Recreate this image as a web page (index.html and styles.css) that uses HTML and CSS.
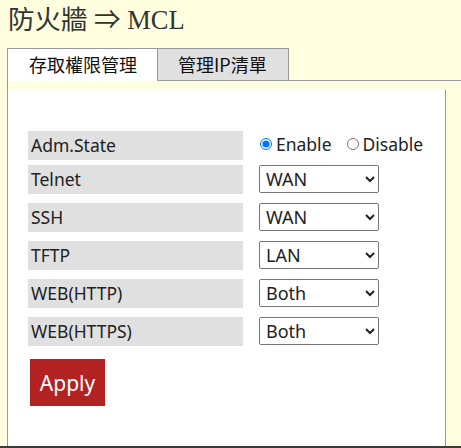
FILE: index.html
```
<!DOCTYPE html>
<html lang="zh-Hant">
<head>
    <meta charset="UTF-8">
    <title>防火牆 ⇒ MCL</title>
    <link rel="stylesheet" href="styles.css">
</head>
<body>
    <div class="page-title">防火牆 ⇒ MCL</div>
    <div class="tabs">
        <div class="tab active">存取權限管理</div>
        <div class="tab">管理IP清單</div>
    </div>
    <div class="tab-body">
        <div class="panel">
            <div class="form-row first">
                <div class="field-label">Adm.State</div>
                <div class="radio-group">
                    <label><input type="radio" name="state" checked>Enable</label>
                    <label><input type="radio" name="state">Disable</label>
                </div>
            </div>
            <div class="form-row">
                <div class="field-label">Telnet</div>
                <select class="field-select"><option>WAN</option><option>LAN</option><option>Both</option></select>
            </div>
            <div class="form-row">
                <div class="field-label">SSH</div>
                <select class="field-select"><option>WAN</option><option>LAN</option><option>Both</option></select>
            </div>
            <div class="form-row">
                <div class="field-label">TFTP</div>
                <select class="field-select"><option>LAN</option><option>WAN</option><option>Both</option></select>
            </div>
            <div class="form-row">
                <div class="field-label">WEB(HTTP)</div>
                <select class="field-select"><option>Both</option><option>WAN</option><option>LAN</option></select>
            </div>
            <div class="form-row">
                <div class="field-label">WEB(HTTPS)</div>
                <select class="field-select"><option>Both</option><option>WAN</option><option>LAN</option></select>
            </div>
            <button class="apply-button">Apply</button>
        </div>
    </div>
    <div class="bottom-bar"></div>
</body>
</html>
```

FILE: styles.css
```
body {
    margin: 0;
    background-color: #ffffe0;
    font-family: "Noto Sans", "Noto Sans CJK TC", sans-serif;
    color: #222;
}
.page-title {
    font-family: "Liberation Serif", "Noto Sans CJK TC", serif;
    font-size: 26.5px;
    line-height: 32px;
    color: #333;
    padding: 4px 8px 0;
    height: 48px;
    box-sizing: border-box;
}
.tabs {
    display: flex;
    margin-left: 7px;
    border-bottom: 1px solid #999;
    height: 32px;
}
.tab {
    font-family: "Noto Sans CJK TC", sans-serif;
    font-size: 18px;
    line-height: 31px;
    padding: 0 20px 0 21px;
    border: 1px solid #999;
    border-bottom: none;
    background-color: #e0e0e0;
    color: #111;
}
.tab + .tab {
    border-left: none;
    border-bottom: 1px solid #999;
    height: 31px;
    padding: 0 21px 0 20px;
}
.tab.active {
    background-color: #fff;
    height: 32px;
    position: relative;
    z-index: 1;
}
.tab-body {
    margin: 0 15px 0 7px;
    border-left: 1px solid #999;
    padding-top: 9px;
}
.panel {
    background-color: #fff;
    border-right: 1px solid #999;
    padding: 41px 20px 40px;
}
.form-row {
    display: flex;
    align-items: flex-start;
    gap: 16px;
    margin-bottom: 9px;
}
.form-row.first {
    align-items: center;
    margin-bottom: 5px;
}
.field-label {
    width: 212px;
    height: 29px;
    line-height: 28px;
    padding-left: 3px;
    background-color: #e0e0e0;
    font-size: 17.5px;
    color: #222;
}
.radio-group {
    display: flex;
    gap: 14px;
    font-size: 17.5px;
    margin-bottom: 4px;
}
.radio-group label {
    display: flex;
    align-items: center;
}
.radio-group input {
    margin: 0 4px 0 1px;
    width: 12px;
    height: 12px;
}
.field-select {
    width: 120px;
    height: 28px;
    font-family: "Noto Sans", sans-serif;
    font-size: 18px;
    color: #222;
    border: 1px solid #767676;
    border-radius: 2px;
    background-color: #fff;
    padding: 0 2px;
}
.apply-button {
    display: block;
    margin: 13px 0 0 2px;
    width: 75px;
    height: 47px;
    background-color: #b22222;
    color: #fff;
    border: none;
    font-family: "Noto Sans", sans-serif;
    font-size: 21px;
    cursor: pointer;
}
.bottom-bar {
    height: 4px;
    background-color: #3a3a3a;
}
```
